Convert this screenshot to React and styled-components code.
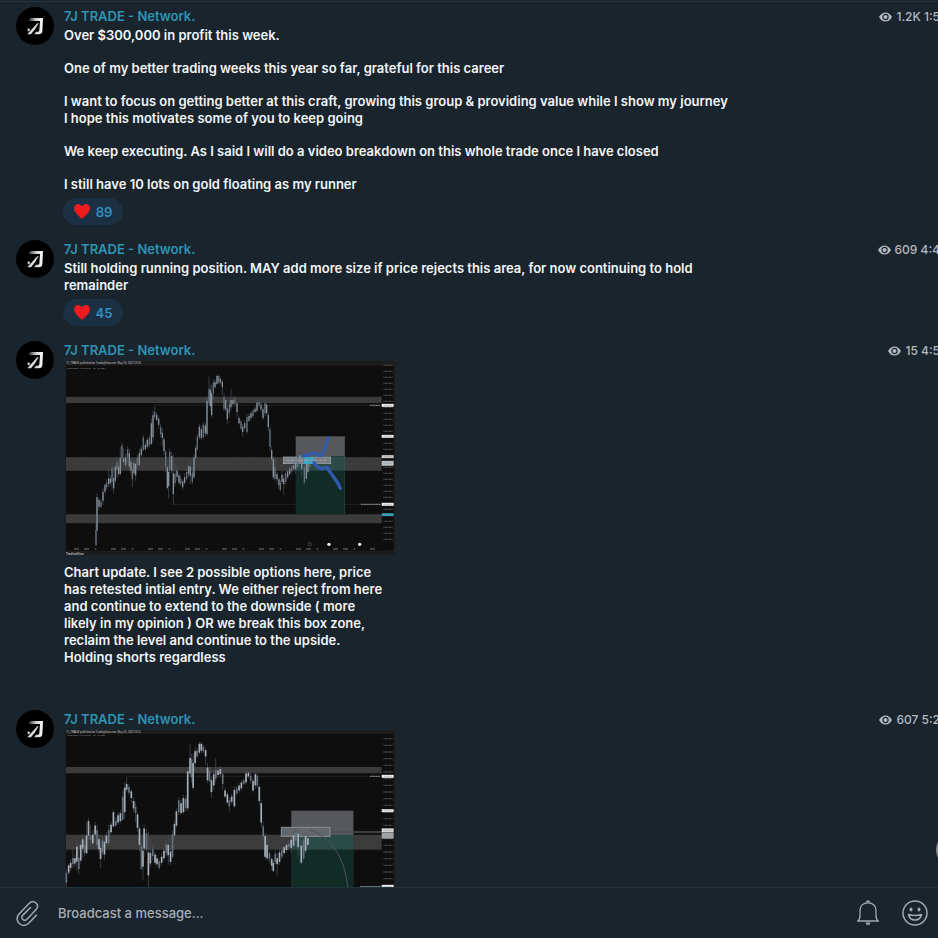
import { useState } from "react";
import styled, { createGlobalStyle } from "styled-components";

const GlobalStyle = createGlobalStyle`
  * {
    box-sizing: border-box;
  }
  body {
    margin: 0;
    background: #1a242d;
    color: #f3f5f6;
    font-family: Inter, "Liberation Sans", sans-serif;
    font-size: 13px;
    font-weight: 500;
    overflow: hidden;
  }
`

const Page = styled.div`
  display: flex;
  flex-direction: column;
  height: 100vh;
  position: relative;
  overflow: hidden;
`

const Feed = styled.main`
  flex: 1;
  min-height: 0;
  overflow: hidden;
  margin-top: 1px;
  padding-top: 5px;
  border-top: 1px solid #22323d;
`

const Message = styled.article`
  display: flex;
  gap: 10px;
  padding-left: 16px;
  margin-bottom: ${(props) => (props.$spaced ? "44px" : "15px")};
`

const Avatar = styled.div`
  flex: none;
  width: 38px;
  height: 38px;
  border-radius: 50%;
  background: #000;
`

const Body = styled.div`
  flex: 1;
  min-width: 0;
`

const Head = styled.header`
  display: flex;
  justify-content: space-between;
  height: 19px;
  line-height: 19px;
`

const Author = styled.a`
  color: #2f93b3;
  font-size: 13px;
  font-weight: 600;
  text-decoration: none;
`

const Meta = styled.span`
  display: flex;
  align-items: center;
  gap: 4px;
  margin-right: -2px;
  color: #b4b9be;
  font-size: 12px;
  white-space: nowrap;
`

const Text = styled.div`
  max-width: ${(props) => (props.$narrow ? "326px" : "680px")};
  margin-top: ${(props) => (props.$narrow ? "9px" : "1px")};
  font-weight: 600;
`

const Paragraph = styled.p`
  margin: 0;
  line-height: 17px;
  white-space: pre-line;

  & + & {
    margin-top: 16px;
  }
`

const Reaction = styled.button`
  display: flex;
  align-items: center;
  justify-content: center;
  gap: 6px;
  width: 60px;
  height: 27px;
  margin: 5px 0 0 -1px;
  padding: 0;
  border: none;
  border-radius: 14px;
  background: #1b3042;
  color: #3390bf;
  font: inherit;
  font-weight: 600;
  cursor: pointer;
`

const ChartImage = styled.svg`
  display: block;
  width: 330px;
  height: 194px;
  margin: 1px 0 0 1px;
  font-family: "Liberation Sans", sans-serif;
`

const Composer = styled.form`
  display: flex;
  align-items: center;
  flex: none;
  height: 51px;
  padding: 0 9px 0 15px;
  border-top: 1px solid #22323d;
  background: #1a242d;
`

const MessageInput = styled.input`
  flex: 1;
  min-width: 0;
  margin-left: 18px;
  padding: 0;
  border: none;
  outline: none;
  background: transparent;
  color: #f3f5f6;
  font: inherit;

  &::placeholder {
    color: #a9aeb3;
    opacity: 1;
  }
`

const IconButton = styled.button`
  display: flex;
  padding: 0;
  margin-left: ${(props) => props.$gap || 0}px;
  border: none;
  background: transparent;
  color: #a3a9ae;
  cursor: pointer;
`

const ScrollDown = styled.button`
  position: absolute;
  right: -34px;
  bottom: 70px;
  width: 36px;
  height: 36px;
  border: 2px solid #858b91;
  border-radius: 50%;
  background: #1a242d;
`

// x, high, body top, body bottom, low
const candles = [
  [108, 520, 540, 586, 588], [111, 430, 442, 542, 545], [117, 445, 450, 470, 480],
  [123, 448, 455, 470, 475], [129, 415, 425, 452, 465], [135, 400, 405, 425, 432],
  [140, 388, 398, 412, 420], [146, 355, 385, 402, 412], [151, 375, 386, 400, 408],
  [156, 336, 355, 395, 420], [161, 350, 385, 415, 430], [166, 340, 350, 392, 400],
  [171, 322, 335, 360, 385], [176, 335, 350, 372, 380], [181, 290, 325, 372, 376],
  [186, 278, 286, 325, 340], [191, 295, 325, 336, 350], [197, 310, 322, 346, 352],
  [203, 288, 298, 322, 340], [208, 296, 310, 350, 362], [213, 325, 335, 362, 372],
  [217, 350, 358, 388, 412], [222, 328, 338, 370, 378], [227, 335, 342, 376, 392],
  [232, 315, 325, 345, 352], [238, 296, 310, 346, 350], [244, 288, 296, 316, 320],
  [250, 255, 262, 300, 304], [256, 275, 285, 298, 302], [262, 262, 270, 290, 296],
  [268, 256, 265, 286, 292], [274, 205, 220, 282, 286], [279, 182, 196, 262, 280],
  [284, 168, 186, 202, 208], [290, 186, 194, 210, 214], [296, 200, 206, 224, 236],
  [302, 222, 232, 252, 262], [307, 235, 248, 264, 290], [312, 262, 268, 304, 315],
  [317, 300, 306, 350, 368], [322, 346, 352, 414, 418], [326, 350, 366, 408, 446],
  [329, 296, 306, 360, 382], [335, 305, 318, 362, 370], [340, 315, 370, 432, 464],
  [345, 340, 372, 400, 410], [351, 348, 362, 380, 392], [357, 368, 376, 398, 404],
  [362, 376, 386, 402, 408], [368, 388, 394, 412, 418], [374, 370, 382, 398, 404],
  [380, 356, 366, 386, 392], [386, 340, 348, 372, 382], [391, 330, 350, 378, 402],
  [397, 352, 368, 396, 404], [402, 312, 322, 382, 386], [407, 285, 294, 324, 330],
  [412, 252, 260, 298, 304], [418, 222, 230, 262, 268], [424, 228, 238, 264, 270],
  [430, 215, 224, 262, 266], [436, 218, 226, 250, 260], [441, 140, 152, 252, 258],
  [447, 80, 116, 158, 168], [451, 105, 120, 168, 182], [455, 104, 130, 196, 202],
  [460, 86, 98, 130, 150], [465, 90, 96, 112, 116], [471, 72, 78, 102, 106],
  [476, 73, 78, 96, 102], [481, 80, 86, 98, 104], [487, 88, 95, 112, 134],
  [492, 130, 142, 176, 184], [497, 140, 150, 178, 184], [502, 165, 176, 208, 224],
  [508, 150, 160, 190, 202], [513, 116, 150, 172, 182], [519, 140, 150, 162, 170],
  [525, 138, 146, 160, 168], [531, 156, 160, 186, 202], [537, 196, 204, 220, 224],
  [543, 208, 214, 236, 240], [548, 222, 230, 246, 260], [554, 212, 220, 234, 240],
  [561, 192, 202, 246, 252], [567, 190, 198, 212, 216], [573, 184, 190, 204, 210],
  [579, 176, 182, 198, 204], [585, 170, 176, 186, 190], [591, 152, 158, 182, 188],
  [597, 150, 156, 166, 172], [603, 156, 164, 178, 186], [609, 172, 178, 204, 210],
  [615, 152, 160, 190, 198], [620, 158, 164, 190, 196], [625, 188, 194, 232, 244],
  [630, 230, 238, 290, 302], [635, 288, 300, 328, 342], [640, 318, 326, 382, 388],
  [645, 322, 350, 386, 392], [651, 366, 372, 388, 400], [657, 382, 388, 406, 418],
  [661, 390, 398, 420, 424], [666, 362, 374, 396, 402], [671, 372, 386, 402, 434],
  [677, 362, 370, 396, 404], [683, 358, 364, 382, 388], [689, 350, 356, 372, 378],
  [695, 345, 350, 364, 370], [701, 338, 346, 356, 364], [707, 328, 336, 358, 372],
  [713, 314, 324, 352, 356], [719, 306, 316, 338, 348], [725, 312, 320, 356, 382],
  [733, 340, 352, 398, 404], [739, 326, 338, 386, 392], [744, 316, 326, 366, 372],
  [750, 322, 332, 350, 356],
]

function Candles({ mapX = (x) => x, mapY = (y) => y, bright }) {
  return candles
    .filter(([x]) => mapX(x) > 17)
    .map(([x, high, top, bottom, low], i) => (
      <g key={x}>
        <path d={`M${mapX(x)} ${mapY(high)}V${mapY(low)}`} stroke="#4b535b" strokeWidth="2" />
        <path
          d={`M${mapX(x)} ${mapY(top)}V${mapY(bottom)}`}
          stroke={i % 3 === 0 ? "#65717d" : bright ? "#a7afb8" : "#87919b"}
          strokeWidth={bright ? 5 : 4}
        />
      </g>
    ))
}

function PriceScale({ top, step, tags }) {
  const rows = Array.from({ length: 30 }, (_, i) => top + i * step)
  return (
    <g>
      {rows.map((y) => (
        <path key={y} d={`M970 ${y}H999`} stroke="#444" strokeWidth="4" strokeDasharray="3 1 7 1" />
      ))}
      {tags.map(([y, height, color]) => (
        <g key={y}>
          <rect x="965" y={y - height / 2} width="36" height={height} fill={color} />
          <path d={`M972 ${y}H995`} stroke="#999" strokeWidth="2" strokeDasharray="3 2" />
        </g>
      ))}
    </g>
  )
}

function ChartUpdate() {
  return (
    <ChartImage viewBox="15 33 990 582" role="img" aria-label="Price chart with two projected paths">
      <rect x="15" y="33" width="990" height="582" fill="#1c1c1d" />
      <rect x="19" y="47" width="982" height="555" fill="#0e0e0f" />
      <text x="18" y="43" fontSize="8" fill="#c4c4c4">7J_TRADE published on TradingView.com, May 18, 2023 16:55</text>
      <text x="22" y="56" fontSize="7" fill="#999">Gold Spot / U.S. Dollar · 1h · OANDA</text>
      <path d="M18 149.500H965" stroke="#3b3b3c" strokeWidth="19" />
      <path d="M18 342H965" stroke="#3b3b3c" strokeWidth="40" />
      <path d="M18 506.500H965" stroke="#3b3b3c" strokeWidth="27" />
      <path d="M284 165H930M340 463H900" stroke="#3c3c3c" strokeWidth="2" strokeDasharray="4 2" />
      <rect x="707" y="259" width="147" height="60" fill="#56585b" />
      <rect x="707" y="319" width="147" height="174" fill="#112b27" />
      <rect x="707" y="319" width="147" height="43" fill="#2b4b49" />
      <path d="M18 324H965" stroke="#555" strokeWidth="1" strokeDasharray="4 3" />
      <path d="M854 259V493" stroke="#63706f" strokeWidth="2" strokeDasharray="3 3" />
      <rect x="670" y="321" width="142" height="20" fill="#747b82" stroke="#a9adb1" strokeWidth="2" />
      <Candles />
      <rect x="732" y="322" width="30" height="20" fill="#3aa7c4" />
      <path d="M676 331H800" stroke="#9ba1a7" strokeWidth="5" strokeDasharray="14 3 9 2" opacity=".7" />
      <path
        d="M730 318C740 312 746 320 753 312C766 300 770 319 782 317C796 305 796 284 806 264"
        fill="none" stroke="#3259ab" strokeWidth="10" strokeLinecap="round"
      />
      <path
        d="M762 338C769 347 775 357 785 356C796 355 800 346 805 358C816 379 830 386 841 415"
        fill="none" stroke="#3259ab" strokeWidth="10" strokeLinecap="round"
      />
      <path d="M930 166H960M902 463H962" stroke="#777" strokeWidth="4" strokeDasharray="8 1" />
      <PriceScale
        top={46}
        step={18}
        tags={[[166, 9, "#eee"], [259, 9, "#e5e5e5"], [320, 9, "#c9c9c9"], [340, 15, "#b7bec2"], [463, 9, "#eee"], [494, 9, "#2c9bb7"]]}
      />
      <rect x="960" y="602" width="45" height="13" fill="#1c1c1d" />
      <path d="M42 597H950" stroke="#555" strokeWidth="4" strokeDasharray="15 15 15 17 5 44" />
      <circle cx="749" cy="583" r="5" fill="none" stroke="#775a5c" strokeWidth="2" />
      <circle cx="807" cy="583" r="5" fill="#eee" />
      <circle cx="899" cy="583" r="5" fill="#eee" />
      <text x="18" y="614" fontSize="9" fontWeight="700" fill="#bbb">TradingView</text>
    </ChartImage>
  )
}

function ChartEntry() {
  return (
    <ChartImage viewBox="15 90 990 582" role="img" aria-label="Price chart with a curved projection">
      <rect x="15" y="90" width="990" height="582" fill="#1c1c1d" />
      <rect x="19" y="102" width="982" height="570" fill="#0e0e0f" />
      <text x="18" y="98" fontSize="8" fill="#c4c4c4">7J_TRADE published on TradingView.com, May 18, 2023 13:11</text>
      <text x="22" y="109" fontSize="7" fill="#999">Gold Spot / U.S. Dollar · 1h · OANDA</text>
      <path d="M18 210.500H965" stroke="#3b3b3c" strokeWidth="19" />
      <path d="M18 427H965" stroke="#3b3b3c" strokeWidth="44" />
      <path d="M200 229H930" stroke="#3c3c3c" strokeWidth="2" strokeDasharray="4 2" />
      <rect x="694" y="332" width="186" height="73" fill="#56585b" />
      <rect x="694" y="405" width="186" height="267" fill="#112b27" />
      <rect x="694" y="405" width="186" height="44" fill="#2b4b49" />
      <path d="M18 403H965M694 332V600M880 332V600" stroke="#555c5e" strokeWidth="1" strokeDasharray="3 3" />
      <path d="M810 396H965" stroke="#4d5053" strokeWidth="4" />
      <rect x="664" y="382" width="146" height="27" fill="#62676c" stroke="#8b9094" strokeWidth="3" />
      <Candles mapX={(x) => 592 + (x - 620) * 1.167} mapY={(y) => 128 + (y - 75) * 1.115} bright />
      <path d="M750 390C816 412 860 478 864 580" fill="none" stroke="#51525e" strokeWidth="3" />
      <path d="M930 229H960M900 560H962" stroke="#777" strokeWidth="4" strokeDasharray="8 1" />
      <PriceScale
        top={116}
        step={20}
        tags={[[229, 9, "#eee"], [332, 9, "#e5e5e5"], [391, 12, "#d5d5d5"], [407, 18, "#9fa4a8"], [559, 9, "#eee"]]}
      />
    </ChartImage>
  )
}

function Logo() {
  return (
    <Avatar>
      <svg width="38" height="38" viewBox="0 0 114 114" aria-hidden="true">
        <defs>
          <linearGradient id="fade" x1="0" x2="1">
            <stop offset="0" stopColor="#222" />
            <stop offset=".5" stopColor="#ccc" />
            <stop offset="1" stopColor="#fff" />
          </linearGradient>
        </defs>
        <path d="M43 33H81L79 72Q78 82 68 82H54L60 74H66Q70 74 70 69L72 42H37Z" fill="url(#fade)" />
        <path d="M64 49H68L57 67L45 82H34L48 66Z" fill="#dcdcde" />
        <path d="M35 64L43 66L40 73L35 73Z" fill="#c8c8ca" />
      </svg>
    </Avatar>
  )
}

function Eye() {
  return (
    <svg width="13" height="10" viewBox="0 0 13 10" aria-hidden="true">
      <path d="M0 5Q2.500 .5 6.500 .5T13 5Q10.500 9.500 6.500 9.500T0 5Z" fill="#b4b9be" />
      <circle cx="6.500" cy="5" r="2.600" fill="none" stroke="#1a242d" strokeWidth="1.200" />
    </svg>
  )
}

function Heart() {
  return (
    <svg width="16" height="15" viewBox="0 0 16 15" aria-hidden="true">
      <path d="M8 15C6 12.500 0 9 0 4.300C0 1.700 1.800 0 4 0C5.800 0 7.300 1 8 2.600C8.700 1 10.200 0 12 0C14.200 0 16 1.700 16 4.300C16 9 10 12.500 8 15Z" fill="#ed1c1f" />
    </svg>
  )
}

function Post({ views, time, paragraphs = [], likes, chart, narrow }) {
  const [liked, setLiked] = useState(false)
  return (
    <Message $spaced={narrow}>
      <Logo />
      <Body>
        <Head>
          <Author href="#channel">7J TRADE - Network.</Author>
          <Meta>
            <Eye />
            {views} {time}
          </Meta>
        </Head>
        {chart}
        {paragraphs.length > 0 && (
          <Text $narrow={narrow}>
            {paragraphs.map((p) => (
              <Paragraph key={p}>{p}</Paragraph>
            ))}
          </Text>
        )}
        {likes && (
          <Reaction type="button" aria-pressed={liked} onClick={() => setLiked(!liked)}>
            <Heart />
            {liked ? likes + 1 : likes}
          </Reaction>
        )}
      </Body>
    </Message>
  )
}

function App() {
  const [draft, setDraft] = useState("")

  function handleSubmit(event) {
    event.preventDefault()
    setDraft("")
  }

  return (
    <Page>
      <GlobalStyle />
      <Feed>
        <Post
          views="1.2K"
          time="1:5"
          likes={89}
          paragraphs={[
            "Over $300,000 in profit this week.",
            "One of my better trading weeks this year so far, grateful for this career",
            "I want to focus on getting better at this craft, growing this group & providing value while I show my journey\nI hope this motivates some of you to keep going",
            "We keep executing. As I said I will do a video breakdown on this whole trade once I have closed",
            "I still have 10 lots on gold floating as my runner",
          ]}
        />
        <Post
          views="609"
          time="4:4"
          likes={45}
          paragraphs={[
            "Still holding running position. MAY add more size if price rejects this area, for now continuing to hold remainder",
          ]}
        />
        <Post
          views="15"
          time="4:5"
          narrow
          chart={<ChartUpdate />}
          paragraphs={[
            "Chart update. I see 2 possible options here, price has retested intial entry. We either reject from here and continue to extend to the downside ( more likely in my opinion ) OR we break this box zone, reclaim the level and continue to the upside. Holding shorts regardless",
          ]}
        />
        <Post views="607" time="5:2" chart={<ChartEntry />} />
      </Feed>
      <ScrollDown type="button" aria-label="Scroll to latest" />
      <Composer onSubmit={handleSubmit}>
        <IconButton type="button" aria-label="Attach a file">
          <svg width="25" height="27" viewBox="0 0 25 27" fill="none" stroke="currentColor" strokeWidth="1.500" strokeLinecap="round">
            <path d="M21.500 15L14.500 22.500C11.500 25.700 7.500 26.500 4.500 23.800C1.300 21 1.300 17 4.300 13.800L14 3.600C16.200 1.300 19 1.200 21 3C23 4.900 23 7.500 20.900 9.800L12.200 19C10.800 20.500 8.900 20.600 7.700 19.500C6.400 18.300 6.500 16.600 7.900 15.100L15.500 7.500" />
          </svg>
        </IconButton>
        <MessageInput
          type="text"
          aria-label="Broadcast a message"
          placeholder="Broadcast a message..."
          value={draft}
          onChange={(event) => setDraft(event.target.value)}
        />
        <IconButton type="button" aria-label="Notifications">
          <svg width="24" height="26" viewBox="0 0 24 26" fill="none" stroke="currentColor" strokeWidth="1.300" strokeLinejoin="round">
            <path d="M1.500 21H22.500C20.500 19.800 20 18.500 20 15.500V10.500C20 6 17 2.800 12 2.800S4 6 4 10.500V15.500C4 18.500 3.500 19.800 1.500 21Z" />
            <path d="M10.500 2.500A1.500 1.500 0 0 1 13.500 2.500" />
            <path d="M9.500 22.500H14.500Q14 25 12 25T9.500 22.500Z" fill="currentColor" stroke="none" />
          </svg>
        </IconButton>
        <IconButton type="button" aria-label="Emoji" $gap={21}>
          <svg width="28" height="28" viewBox="0 0 28 28" fill="none" stroke="currentColor" strokeWidth="1.500">
            <circle cx="14" cy="14" r="12" />
            <ellipse cx="10" cy="10.500" rx="1.500" ry="2" fill="currentColor" stroke="none" />
            <ellipse cx="18" cy="10.500" rx="1.500" ry="2" fill="currentColor" stroke="none" />
            <path d="M7.500 15.500Q14 17.500 20.500 15.500Q19.500 21 14 21T7.500 15.500Z" strokeLinejoin="round" />
          </svg>
        </IconButton>
      </Composer>
    </Page>
  )
}

export default App;
